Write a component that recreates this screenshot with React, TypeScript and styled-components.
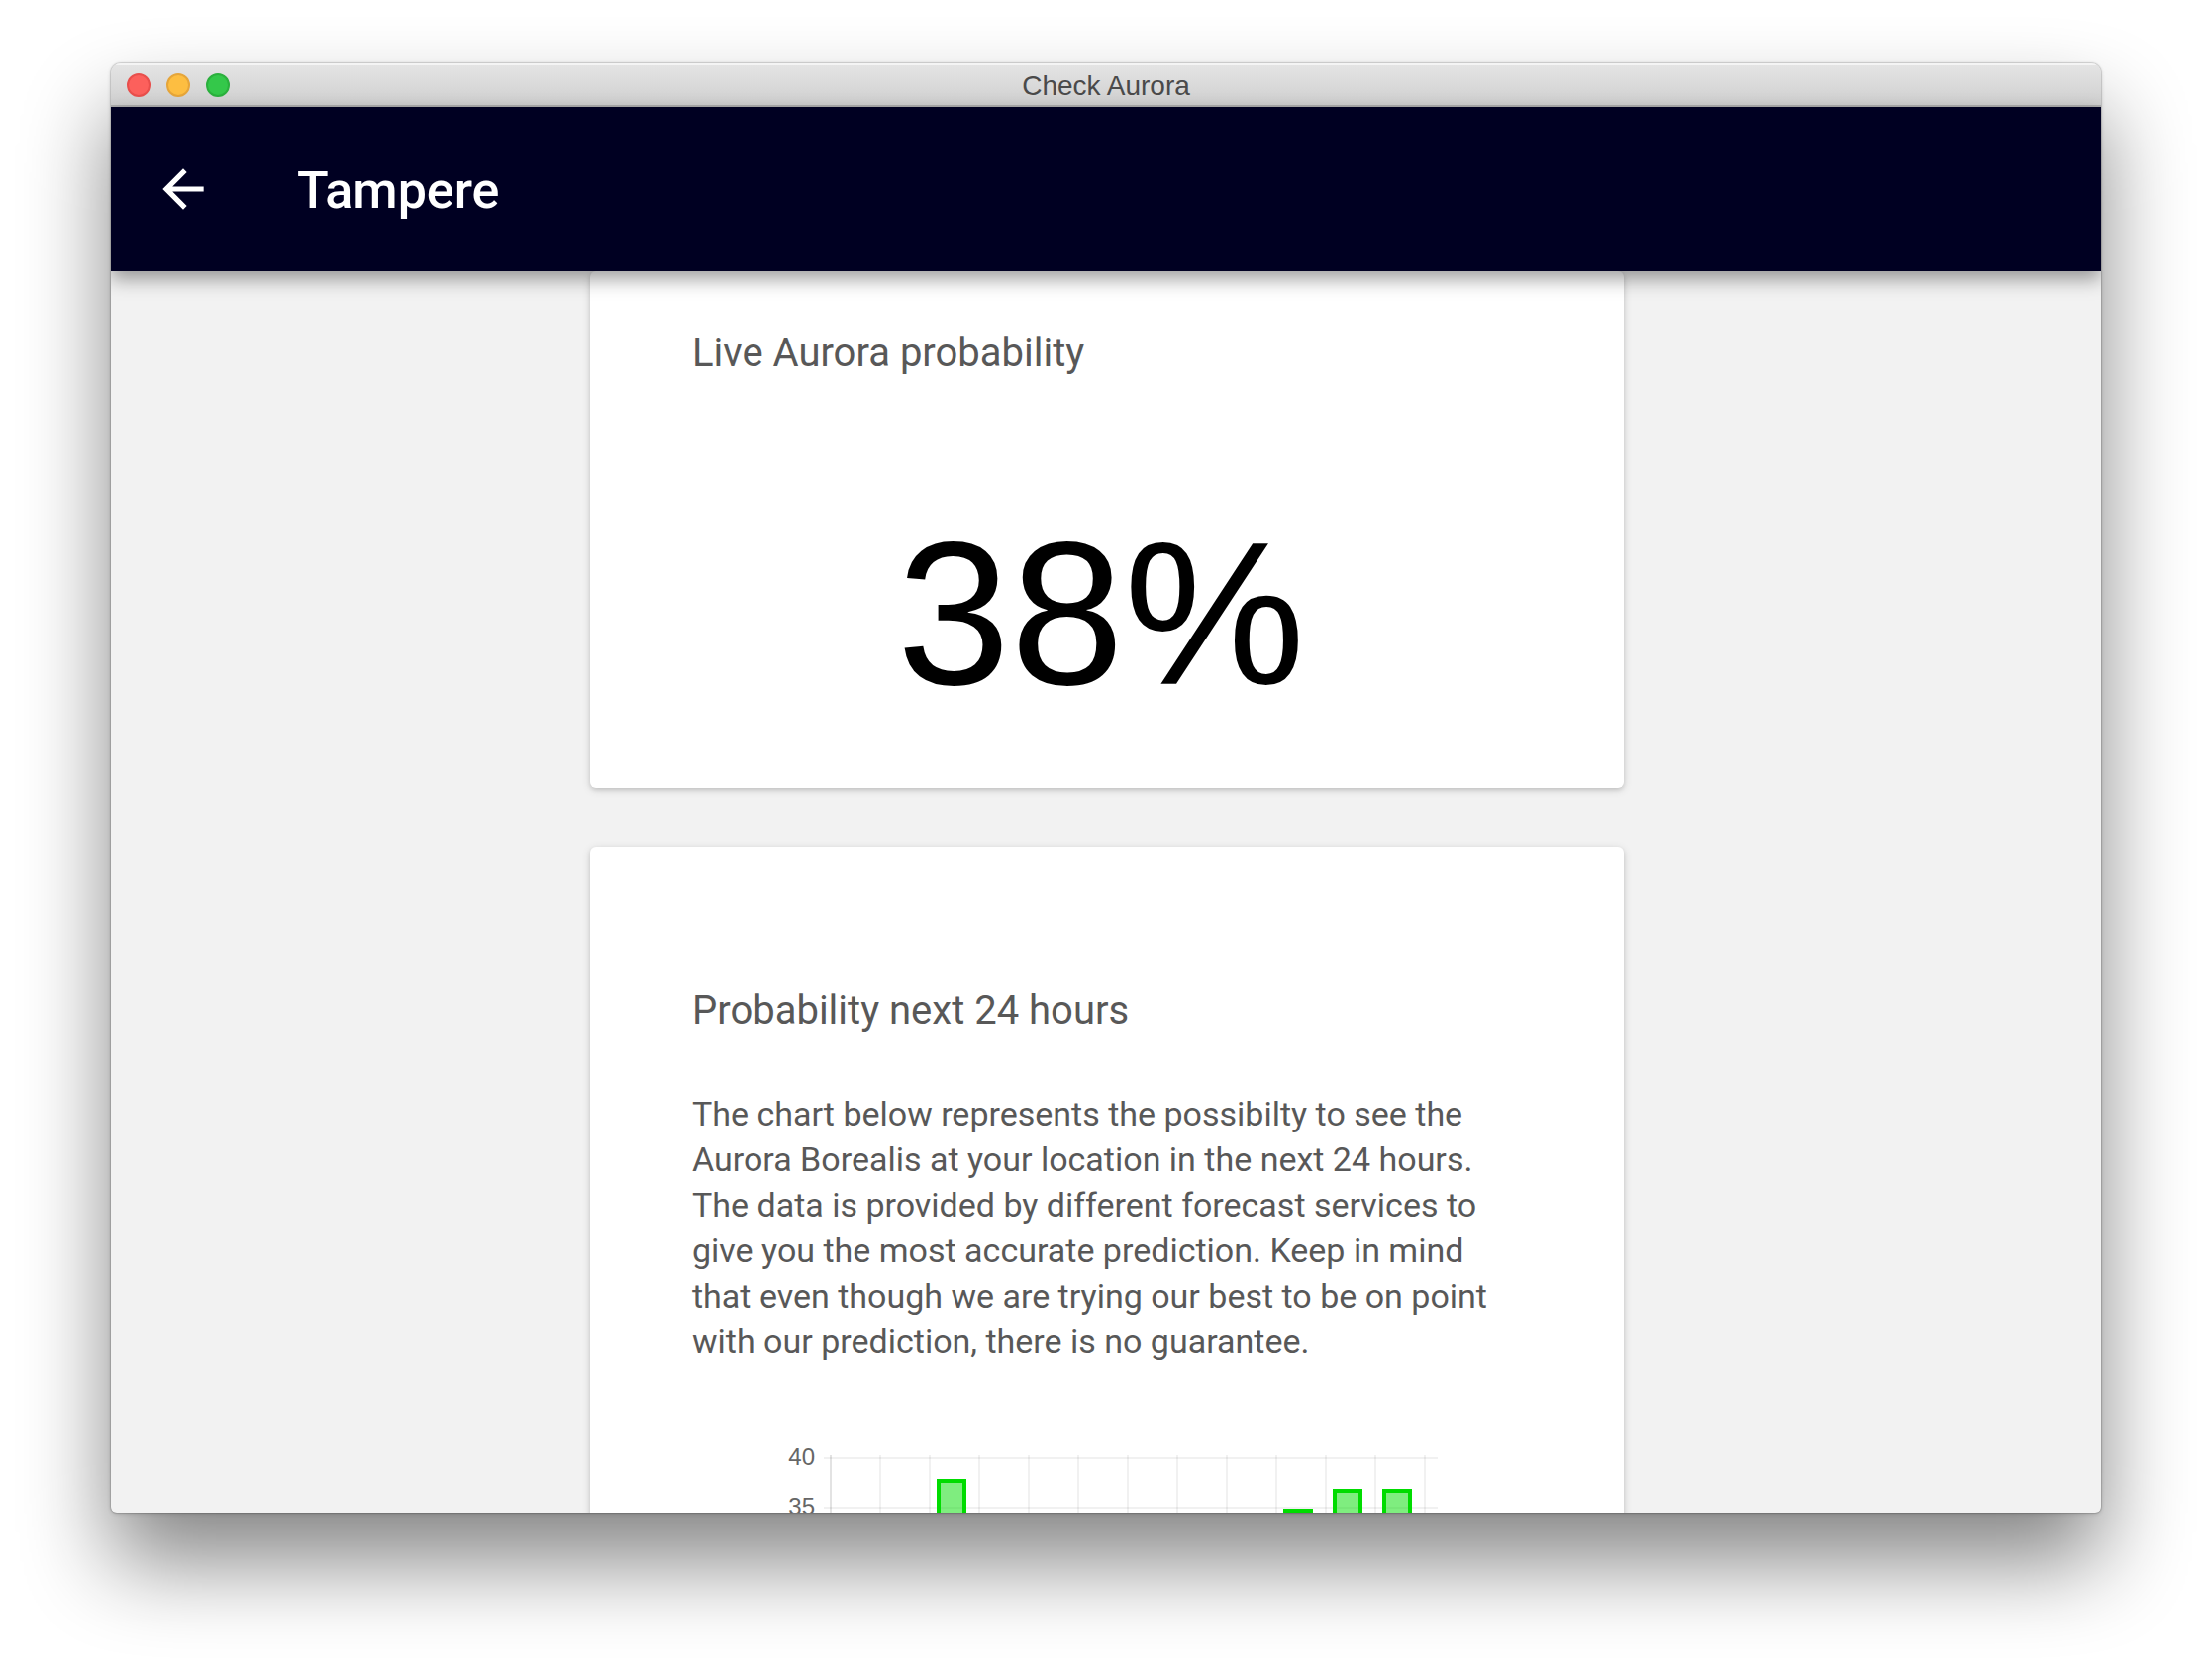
import React from "react";
import styled, { createGlobalStyle } from "styled-components";

const GlobalStyle = createGlobalStyle`
  * { box-sizing: border-box; }
  body { margin: 0; background: #fff; }
`;

const Desktop = styled.div`
  display: flex;
  height: 100vh;
  padding: 64px 112px 160px;
  overflow: hidden;
  font-family: Roboto, "Liberation Sans", sans-serif;
`;

const Window = styled.div`
  flex: 1;
  display: flex;
  flex-direction: column;
  min-width: 0;
  border-radius: 10px 10px 6px 6px;
  overflow: hidden;
  background: #f2f2f2;
  box-shadow:
    0 0 1px 1px rgba(0, 0, 0, 0.14),
    0 1px 4px rgba(0, 0, 0, 0.16),
    0 50px 88px rgba(0, 0, 0, 0.48);
`;

const TitleBar = styled.header`
  flex: none;
  display: grid;
  grid-template-columns: 1fr auto 1fr;
  align-items: center;
  height: 44px;
  padding: 0 16px;
  background: linear-gradient(#e5e5e5, #cecece);
  box-shadow: inset 0 2px 0 #f4f4f4, inset 0 -2px 0 #aeaeae;
`;

const Lights = styled.div`
  display: flex;
  gap: 16px;
`;

const Light = styled.button<{ $fill: string; $edge: string }>`
  width: 24px;
  height: 24px;
  padding: 0;
  border: 2px solid ${(p) => p.$edge};
  border-radius: 50%;
  background: ${(p) => p.$fill};
`;

const WindowTitle = styled.div`
  padding-top: 2px;
  font: 28px/32px "Liberation Sans", Arial, sans-serif;
  color: #4a4a4a;
`;

const AppBar = styled.nav`
  position: relative;
  z-index: 1;
  flex: none;
  display: flex;
  align-items: center;
  gap: 84px;
  height: 166px;
  padding: 0 42px;
  background: #000022;
  color: #fff;
  box-shadow: 0 8px 18px rgba(0, 0, 0, 0.38);
`;

const BackButton = styled.button`
  display: flex;
  padding: 0;
  border: 0;
  background: none;
  color: inherit;
`;

const PageTitle = styled.h1`
  margin: 0;
  padding-top: 4px;
  font-size: 52px;
  line-height: 60px;
  font-weight: 500;
`;

const Content = styled.main`
  flex: 1;
  min-height: 0;
  display: flex;
  flex-direction: column;
  align-items: center;
  gap: 60px;
  padding-left: 2px;
  overflow: hidden;
`;

const Card = styled.section<{ $top: number }>`
  flex: none;
  width: 100%;
  max-width: 1044px;
  padding: ${(p) => p.$top}px 103px 56px;
  border-radius: 6px;
  background: #fff;
  box-shadow:
    0 2px 4px rgba(0, 0, 0, 0.12),
    0 2px 10px rgba(0, 0, 0, 0.12);
`;

const CardTitle = styled.h2`
  margin: 0;
  font-size: 40px;
  line-height: 48px;
  font-weight: 400;
  color: #585858;
`;

const Probability = styled.div`
  margin-top: 119px;
  padding-right: 12px;
  font: 206px/240px "Liberation Sans", Arial, sans-serif;
  text-align: center;
  color: #000;
`;

const Description = styled.p`
  margin: 57px 0 75px;
  font-size: 34px;
  line-height: 46px;
  color: #585858;
`;

const Chart = styled.svg`
  display: block;
  margin: 0 auto;
  font: 24px "Liberation Sans", Arial, sans-serif;
`;

const CHART_TOP = 20;
const AXIS_X = 55;
const SLOT = 50;
const MAX = 40;
const UNIT = 10;
const SLOTS = 12;
const TICKS = [40, 35];
const BARS = [
  { slot: 2, value: 38 },
  { slot: 9, value: 35 },
  { slot: 10, value: 37 },
  { slot: 11, value: 37 },
];

const yOf = (value: number) => CHART_TOP + (MAX - value) * UNIT;

function ForecastChart() {
  const bottom = yOf(30);
  return (
    <Chart width={668} height={bottom} viewBox={`0 0 668 ${bottom}`} role="img">
      <g fill="none" stroke="#000" strokeOpacity={0.055} strokeWidth={2}>
        {TICKS.map((t) => (
          <path key={t} d={`M48 ${yOf(t)}H668`} />
        ))}
        {Array.from({ length: SLOTS + 1 }, (_, i) => (
          <path
            key={i}
            d={`M${AXIS_X + i * SLOT} ${CHART_TOP - 3}V${bottom}`}
            strokeOpacity={i === 0 ? 0.11 : 0.055}
          />
        ))}
      </g>
      {TICKS.map((t) => (
        <text key={t} x={39} y={yOf(t) + 7} textAnchor="end" fill="#666">
          {t}
        </text>
      ))}
      {BARS.map(({ slot, value }) => {
        const left = AXIS_X + slot * SLOT + 9;
        const top = yOf(value) + 3;
        return (
          <path
            key={slot}
            d={`M${left} ${bottom}V${top}h26V${bottom}`}
            fill="rgba(0,220,0,0.5)"
            stroke="#00dc00"
            strokeWidth={4}
          />
        );
      })}
    </Chart>
  );
}

export default function App() {
  return (
    <>
      <GlobalStyle />
      <Desktop>
        <Window>
          <TitleBar>
            <Lights>
              <Light aria-label="Close" $fill="#fc605c" $edge="#e84f4c" />
              <Light aria-label="Minimize" $fill="#fdbe41" $edge="#e5a53a" />
              <Light aria-label="Zoom" $fill="#34c84a" $edge="#2bb03d" />
            </Lights>
            <WindowTitle>Check Aurora</WindowTitle>
          </TitleBar>
          <AppBar>
            <BackButton aria-label="Back">
              <svg width="62" height="62" viewBox="0 0 24 24" fill="currentColor">
                <path d="M20 11H7.83l5.59-5.59L12 4l-8 8 8 8 1.41-1.41L7.83 13H20v-2z" />
              </svg>
            </BackButton>
            <PageTitle>Tampere</PageTitle>
          </AppBar>
          <Content>
            <Card $top={59}>
              <CardTitle>Live Aurora probability</CardTitle>
              <Probability>38%</Probability>
            </Card>
            <Card $top={141}>
              <CardTitle>Probability next 24 hours</CardTitle>
              <Description>
                The chart below represents the possibilty to see the Aurora Borealis at your
                location in the next 24 hours. The data is provided by different forecast services
                to give you the most accurate prediction. Keep in mind that even though we are
                trying our best to be on point with our prediction, there is no guarantee.
              </Description>
              <ForecastChart />
            </Card>
          </Content>
        </Window>
      </Desktop>
    </>
  );
}
